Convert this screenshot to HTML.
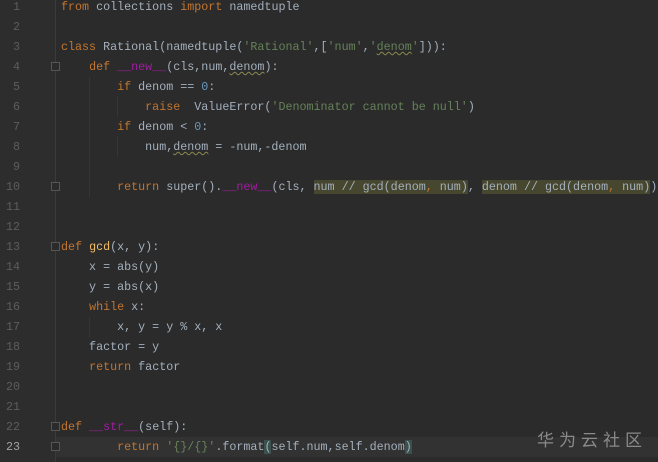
<!DOCTYPE html>
<html><head><meta charset="utf-8"><style>
body{margin:0;width:658px;height:462px;overflow:hidden;background:#2b2b2b;font-family:"Liberation Mono",monospace;font-size:11.7px;color:#a3b0bd}
.g{position:absolute;left:0;top:0;width:55px;height:462px;background:#2d2d2d;border-right:1px solid #3a3a3a}
.l{position:absolute;left:0;height:20px;line-height:20px;white-space:pre;width:658px}
.n{position:absolute;left:0;width:20px;text-align:right;color:#5a5d60}
.c{position:absolute;left:61px}
.k{color:#c27530}.s{color:#66825a}.p{color:#a21ca2}.m{color:#6897bb}.f{color:#f0bc68}
.h{background:#47472f}
.cur{background:#323232}
.w{position:absolute;left:537px;top:426px;color:#8a8a8a;font-family:"Noto Sans CJK SC",sans-serif;font-size:17px;letter-spacing:5px}
.u{text-decoration:underline wavy #8a8a50;text-decoration-thickness:1px}
.fold{position:absolute;left:51px;width:7px;height:7px;border:1px solid #555;background:#2b2b2b}
.ig{position:absolute;width:1px;background:#363636}
</style></head><body>
<div class="l cur" style="top:437px"></div>
<div class="g"></div>
<div class="ig" style="left:89px;top:77px;height:120px"></div>
<div class="ig" style="left:117px;top:97px;height:20px"></div>
<div class="ig" style="left:117px;top:137px;height:20px"></div>
<div class="ig" style="left:89px;top:317px;height:20px"></div>
<div class="l" style="top:-3px"><span class="n">1</span><span class="c"><span class="k">from</span> collections <span class="k">import</span> namedtuple</span></div>
<div class="l" style="top:17px"><span class="n">2</span></div>
<div class="l" style="top:37px"><span class="n">3</span><span class="c"><span class="k">class</span> Rational(namedtuple(<span class="s">'Rational'</span>,[<span class="s">'num'</span>,<span class="s">'<span class="u">denom</span>'</span>])):</span></div>
<div class="l" style="top:57px"><span class="n">4</span><span class="c">    <span class="k">def</span> <span class="p">__new__</span>(cls,num,<span class="u">denom</span>):</span></div>
<div class="l" style="top:77px"><span class="n">5</span><span class="c">        <span class="k">if</span> denom == <span class="m">0</span>:</span></div>
<div class="l" style="top:97px"><span class="n">6</span><span class="c">            <span class="k">raise</span>  ValueError(<span class="s">'Denominator cannot be null'</span>)</span></div>
<div class="l" style="top:117px"><span class="n">7</span><span class="c">        <span class="k">if</span> denom &lt; <span class="m">0</span>:</span></div>
<div class="l" style="top:137px"><span class="n">8</span><span class="c">            num,<span class="u">denom</span> = -num,-denom</span></div>
<div class="l" style="top:157px"><span class="n">9</span></div>
<div class="l" style="top:177px"><span class="n">10</span><span class="c">        <span class="k">return</span> super().<span class="p">__new__</span>(cls, <span class="h">num // gcd(denom<span class="k">,</span> num)</span>, <span class="h">denom // gcd(denom<span class="k">,</span> num)</span>)</span></div>
<div class="l" style="top:197px"><span class="n">11</span></div>
<div class="l" style="top:217px"><span class="n">12</span></div>
<div class="l" style="top:237px"><span class="n">13</span><span class="c"><span class="k">def</span> <span class="f">gcd</span>(x, y):</span></div>
<div class="l" style="top:257px"><span class="n">14</span><span class="c">    x = abs(y)</span></div>
<div class="l" style="top:277px"><span class="n">15</span><span class="c">    y = abs(x)</span></div>
<div class="l" style="top:297px"><span class="n">16</span><span class="c">    <span class="k">while</span> x:</span></div>
<div class="l" style="top:317px"><span class="n">17</span><span class="c">        x, y = y % x, x</span></div>
<div class="l" style="top:337px"><span class="n">18</span><span class="c">    factor = y</span></div>
<div class="l" style="top:357px"><span class="n">19</span><span class="c">    <span class="k">return</span> factor</span></div>
<div class="l" style="top:377px"><span class="n">20</span></div>
<div class="l" style="top:397px"><span class="n">21</span></div>
<div class="l" style="top:417px"><span class="n">22</span><span class="c"><span class="k">def</span> <span class="p">__str__</span>(self):</span></div>
<div class="l" style="top:437px"><span class="n" style="color:#a4a3a3">23</span><span class="c">        <span class="k">return</span> <span class="s">'{}/{}'</span>.format<span style="background:#3b514d">(</span>self.num,self.denom<span style="background:#3b514d">)</span></span></div>
<div class="fold" style="top:62px"></div>
<div class="fold" style="top:182px"></div>
<div class="fold" style="top:242px"></div>
<div class="fold" style="top:422px"></div>
<div class="fold" style="top:442px"></div>
<div class="w">华为云社区</div>
</body></html>
